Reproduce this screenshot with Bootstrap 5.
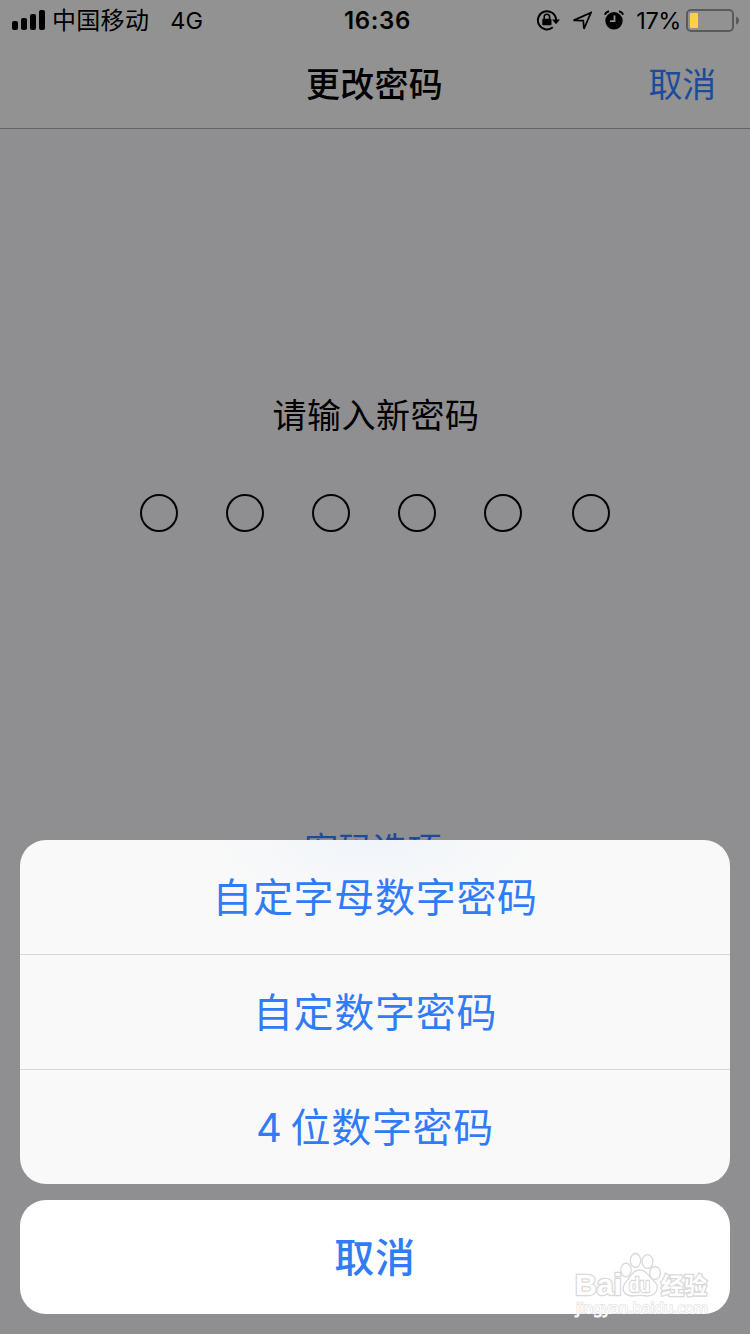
<!DOCTYPE html>
<html lang="zh-CN">
<head>
<meta charset="utf-8">
<meta name="viewport" content="width=device-width, initial-scale=1">
<title>更改密码</title>
<link href="https://cdn.jsdelivr.net/npm/bootstrap@5.3.0/dist/css/bootstrap.min.css" rel="stylesheet">
<style>
  body { font-family: Inter, "Noto Sans CJK SC", sans-serif; background: #8f8f91; color: #000; line-height: 1; }
  .screen { height: 1334px; overflow: hidden; }
  .top-area { height: 129px; background: #929292; border-bottom: 1px solid #656566; }
  .status-bar { height: 40px; font-size: 24px; padding: 0 10px 0 12px; }
  .status-bar span { padding-top: 2px; }
  .status-side { flex: 1 1 0; }
  .carrier { letter-spacing: .3px; margin-left: 7px; }
  .network { margin-left: 21px; font-size: 23.5px; }
  .clock { font-size: 24px; font-weight: 600; letter-spacing: .6px; padding-left: 3px; }
  .level { font-size: 23.5px; letter-spacing: -.4px; margin-left: 12px; }
  .title-bar { height: 88px; padding: 2px 34px 0; }
  .title-text { font-size: 34px; font-weight: 500; letter-spacing: .3px; margin-right: 1px; }
  .title-cancel { font-size: 34px; color: #1c4b9c; letter-spacing: -.3px; }
  .prompt { margin-top: 269px; padding-left: 2px; font-size: 34px; line-height: 36px; letter-spacing: .5px; }
  .dots { margin-top: 60px; padding-left: 140px; gap: 48px; }
  .dot { width: 38px; height: 38px; border: 2px solid #050505; }
  .dot:last-child { margin-left: 2px; }
  .options-link { margin-top: 300px; padding-right: 4px; font-size: 34px; line-height: 36px; color: #1c4b9c; letter-spacing: .4px; }
  .sheet { padding: 0 20px 20px; color: #327bf7; font-size: 40px; letter-spacing: .7px; }
  .sheet-group { border-radius: 26px; background: #f9f9f9; overflow: hidden; }
  .sheet-group.first-group { background: radial-gradient(ellipse 170px 70px at 50% 0, #f0f5fb, #f9f9f9); }
  .sheet-btn { height: 114px; border: 0; padding: 2px 0 0; background: none; color: inherit; font: inherit; letter-spacing: inherit; }
  .sheet-btn + .sheet-btn { height: 115px; border-top: 1px solid #d8d8da; }
  .four-digit { word-spacing: -4px; }
  .sheet-group.sheet-cancel { background: #fff; font-weight: 500; margin-top: 16px; }
  .watermark { right: 36px; bottom: 12px; }
</style>
</head>
<body>
<main class="screen position-relative">
  <header class="top-area">
    <div class="status-bar d-flex align-items-center">
      <div class="status-side d-flex align-items-center">
        <svg width="33" height="20" viewBox="0 0 33 20"><rect y="11" width="6" height="9" rx="2"/><rect x="9" y="8" width="6" height="12" rx="2"/><rect x="18" y="4" width="6" height="16" rx="2"/><rect x="27" width="6" height="20" rx="2"/></svg>
        <span class="carrier">中国移动</span>
        <span class="network">4G</span>
      </div>
      <span class="clock">16:36</span>
      <div class="status-side d-flex align-items-center justify-content-end">
        <svg width="24" height="24" viewBox="0 0 24 24"><path d="M16.800 19.300A9.100 9.100 0 1 1 20.100 12" fill="none" stroke="#000" stroke-width="2"/><path d="M16 11.500h8l-4 4.700z"/><rect x="6.300" y="10.800" width="9.200" height="6.400" rx="1"/><path d="M8.200 11V9a2.700 2.700 0 0 1 5.400 0v2" fill="none" stroke="#000" stroke-width="1.600"/></svg>
        <svg class="ms-2" width="24" height="20" viewBox="-5 -1 24 20"><path d="M.500 9.400 18 1.600 10.900 17.800 10.300 9.700z" fill="none" stroke="#000" stroke-width="1.700"/></svg>
        <svg width="20" height="20" viewBox="0 0 20 20" style="margin-left:12px"><circle cx="10" cy="10.800" r="8.700"/><path d="M.800 4.600Q2 1.800 5 1.200M19.200 4.600Q18 1.800 15 1.200" fill="none" stroke="#000" stroke-width="2"/><path d="M10.500 5.500v5.700H6" fill="none" stroke="#929292" stroke-width="1.800"/></svg>
        <span class="level">17%</span>
        <svg width="54" height="24" viewBox="0 0 54 24" style="margin-left:5px"><rect x="1" y="2" width="46" height="21" rx="4" fill="none" stroke="#5a5a5a" stroke-width="2"/><rect x="4" y="5" width="8" height="15" rx="1" fill="#ffd043"/><path d="M50 8.500q3 1 3 4t-3 4z" fill="#5a5a5a"/></svg>
      </div>
    </div>
    <div class="title-bar d-flex align-items-center">
      <div class="status-side"></div>
      <span class="title-text">更改密码</span>
      <div class="status-side text-end"><span class="title-cancel">取消</span></div>
    </div>
  </header>

  <section class="text-center">
    <div class="prompt">请输入新密码</div>
    <div class="dots d-flex">
      <span class="dot rounded-circle"></span><span class="dot rounded-circle"></span><span class="dot rounded-circle"></span><span class="dot rounded-circle"></span><span class="dot rounded-circle"></span><span class="dot rounded-circle"></span>
    </div>
    <div class="options-link">密码选项</div>
  </section>

  <div class="sheet position-absolute start-0 bottom-0 w-100">
    <div class="sheet-group first-group d-flex flex-column">
      <button type="button" class="sheet-btn">自定字母数字密码</button>
      <button type="button" class="sheet-btn">自定数字密码</button>
      <button type="button" class="sheet-btn four-digit">4 位数字密码</button>
    </div>
    <div class="sheet-group sheet-cancel d-flex flex-column">
      <button type="button" class="sheet-btn">取消</button>
    </div>
  </div>

  <svg class="watermark position-absolute" width="144" height="72" viewBox="570 1250 144 72">
    <g fill="#fff" stroke="#d9d9d9" stroke-width="1.300" paint-order="stroke" font-family="Liberation Sans, sans-serif">
      <text x="575" y="1295" font-size="30" font-weight="700" textLength="47" lengthAdjust="spacingAndGlyphs" stroke-width="2.600">Bai</text>
      <g paint-order="normal" stroke-width="1.300"><ellipse cx="626" cy="1270" rx="5.200" ry="6.800"/><ellipse cx="635.500" cy="1260.500" rx="5.200" ry="7"/><ellipse cx="647.500" cy="1261.500" rx="5.400" ry="6.800"/><ellipse cx="655" cy="1273" rx="5.400" ry="6.500"/>
      <path d="M640 1270c6 0 8 5 11 8 4 4 7 6 6 11-1 6-6 7-10 7-5-1-9-1-14 0-5 0-9-2-10-7 0-5 3-7 6-11s5-8 11-8z"/></g>
      <text x="629" y="1292" font-size="20" font-weight="700" textLength="21" lengthAdjust="spacingAndGlyphs" stroke-width="2.400">du</text>
      <text x="661" y="1294" font-family="Noto Sans CJK SC, sans-serif" font-size="23" font-weight="700" textLength="46" stroke-width="2.600">经验</text>
      <text x="576" y="1313" font-family="Noto Sans, sans-serif" font-size="15" textLength="132" lengthAdjust="spacingAndGlyphs" stroke="#e2e2e2" stroke-width="1.400">jingyan.baidu.com</text>
    </g>
  </svg>
</main>
<script src="https://cdn.jsdelivr.net/npm/bootstrap@5.3.0/dist/js/bootstrap.bundle.min.js"></script>
</body>
</html>
